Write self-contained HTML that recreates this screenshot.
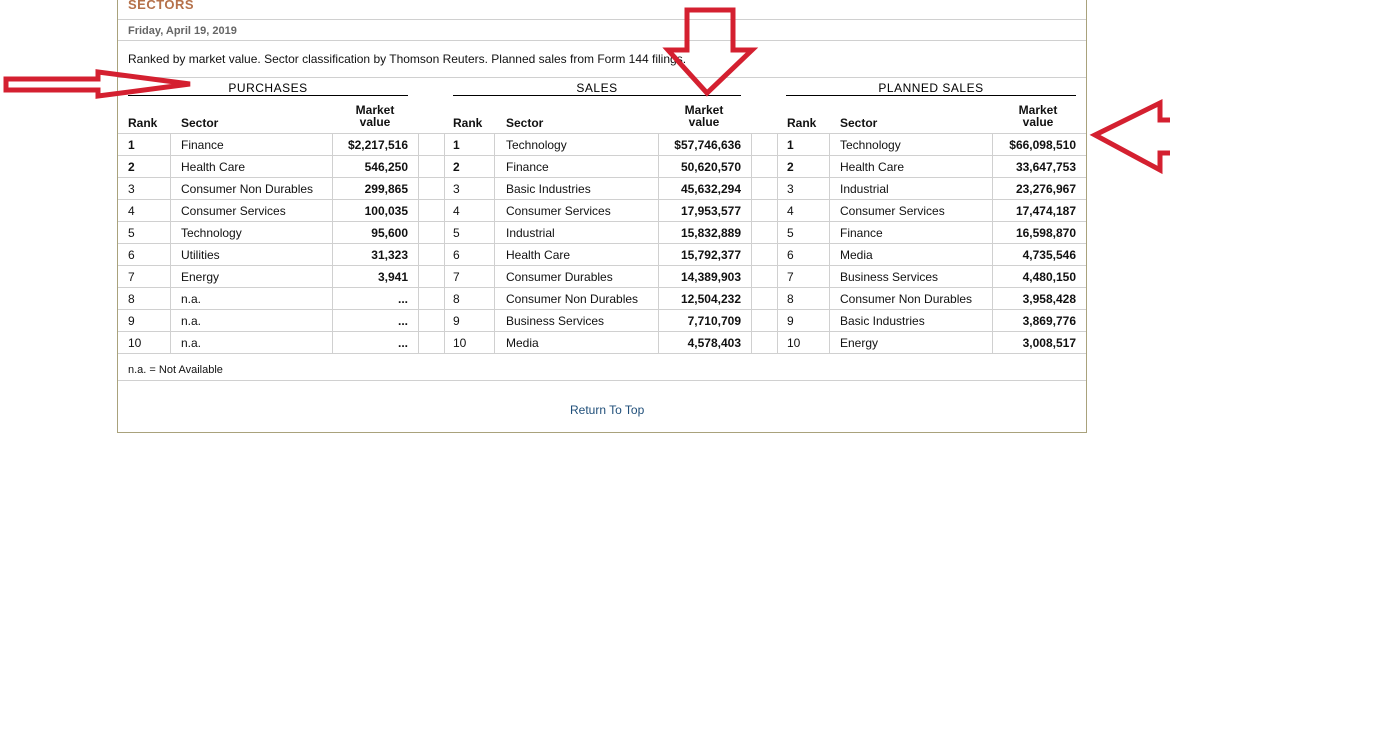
<!DOCTYPE html>
<html><head><meta charset="utf-8"><style>
body{margin:0;width:1398px;height:746px;background:#fff;font-family:"Liberation Sans",Arial,sans-serif;color:#111;position:relative;overflow:hidden}
.box{position:absolute;left:117px;top:-2px;width:968px;height:433px;border:1px solid #a9a27c}
.hl{position:absolute;left:118px;width:968px;height:1px;background:#d0d0d0}
.vl{position:absolute;width:1px;background:#d0d0d0;top:133px;height:220px}
.t{position:absolute;font-size:12px;line-height:14px;white-space:nowrap}
.b{font-weight:bold}
.gh{position:absolute;font-size:12px;letter-spacing:0.5px;text-align:center;border-bottom:1px solid #000;height:14px;top:81px;line-height:14px;color:#000}
.row{position:absolute;left:0;width:1398px;height:22px}
.row span{position:absolute;font-size:12px;top:4px;line-height:14px;white-space:nowrap}
.row .v{font-weight:bold;text-align:right;width:100px}
</style></head><body>
<div class="box"></div>
<div class="t b" style="left:128px;top:-2px;color:#b5714a;font-size:13px;letter-spacing:0.5px">SECTORS</div>
<div class="hl" style="top:19px"></div>
<div class="t b" style="left:128px;top:24px;color:#666;font-size:11px">Friday, April 19, 2019</div>
<div class="hl" style="top:40px"></div>
<div class="t" style="left:128px;top:52px">Ranked by market value. Sector classification by Thomson Reuters. Planned sales from Form 144 filings.</div>
<div class="hl" style="top:77px"></div>
<div class="gh" style="left:128px;width:280px">PURCHASES</div>
<div class="gh" style="left:453px;width:288px">SALES</div>
<div class="gh" style="left:786px;width:290px">PLANNED SALES</div>

<div class="t b" style="left:128px;top:116px">Rank</div><div class="t b" style="left:181px;top:116px">Sector</div><div class="t b" style="left:348px;top:104px;width:54px;text-align:center;line-height:12px">Market<br>value</div>
<div class="t b" style="left:453px;top:116px">Rank</div><div class="t b" style="left:506px;top:116px">Sector</div><div class="t b" style="left:677px;top:104px;width:54px;text-align:center;line-height:12px">Market<br>value</div>
<div class="t b" style="left:787px;top:116px">Rank</div><div class="t b" style="left:840px;top:116px">Sector</div><div class="t b" style="left:1011px;top:104px;width:54px;text-align:center;line-height:12px">Market<br>value</div>

<div class="hl" style="top:133px"></div>
<div class="hl" style="top:155px"></div>
<div class="hl" style="top:177px"></div>
<div class="hl" style="top:199px"></div>
<div class="hl" style="top:221px"></div>
<div class="hl" style="top:243px"></div>
<div class="hl" style="top:265px"></div>
<div class="hl" style="top:287px"></div>
<div class="hl" style="top:309px"></div>
<div class="hl" style="top:331px"></div>
<div class="hl" style="top:353px"></div>
<div class="hl" style="top:380px"></div>
<div class="vl" style="left:170px"></div><div class="vl" style="left:332px"></div><div class="vl" style="left:418px"></div>
<div class="vl" style="left:444px"></div><div class="vl" style="left:494px"></div><div class="vl" style="left:658px"></div>
<div class="vl" style="left:751px"></div><div class="vl" style="left:777px"></div><div class="vl" style="left:829px"></div><div class="vl" style="left:992px"></div>

<div class="row" style="top:134px"><span class="b" style="left:128px">1</span><span style="left:181px">Finance</span><span class="v" style="left:308px">$2,217,516</span><span class="b" style="left:453px">1</span><span style="left:506px">Technology</span><span class="v" style="left:641px">$57,746,636</span><span class="b" style="left:787px">1</span><span style="left:840px">Technology</span><span class="v" style="left:976px">$66,098,510</span></div>
<div class="row" style="top:156px"><span class="b" style="left:128px">2</span><span style="left:181px">Health Care</span><span class="v" style="left:308px">546,250</span><span class="b" style="left:453px">2</span><span style="left:506px">Finance</span><span class="v" style="left:641px">50,620,570</span><span class="b" style="left:787px">2</span><span style="left:840px">Health Care</span><span class="v" style="left:976px">33,647,753</span></div>
<div class="row" style="top:178px"><span style="left:128px">3</span><span style="left:181px">Consumer Non Durables</span><span class="v" style="left:308px">299,865</span><span style="left:453px">3</span><span style="left:506px">Basic Industries</span><span class="v" style="left:641px">45,632,294</span><span style="left:787px">3</span><span style="left:840px">Industrial</span><span class="v" style="left:976px">23,276,967</span></div>
<div class="row" style="top:200px"><span style="left:128px">4</span><span style="left:181px">Consumer Services</span><span class="v" style="left:308px">100,035</span><span style="left:453px">4</span><span style="left:506px">Consumer Services</span><span class="v" style="left:641px">17,953,577</span><span style="left:787px">4</span><span style="left:840px">Consumer Services</span><span class="v" style="left:976px">17,474,187</span></div>
<div class="row" style="top:222px"><span style="left:128px">5</span><span style="left:181px">Technology</span><span class="v" style="left:308px">95,600</span><span style="left:453px">5</span><span style="left:506px">Industrial</span><span class="v" style="left:641px">15,832,889</span><span style="left:787px">5</span><span style="left:840px">Finance</span><span class="v" style="left:976px">16,598,870</span></div>
<div class="row" style="top:244px"><span style="left:128px">6</span><span style="left:181px">Utilities</span><span class="v" style="left:308px">31,323</span><span style="left:453px">6</span><span style="left:506px">Health Care</span><span class="v" style="left:641px">15,792,377</span><span style="left:787px">6</span><span style="left:840px">Media</span><span class="v" style="left:976px">4,735,546</span></div>
<div class="row" style="top:266px"><span style="left:128px">7</span><span style="left:181px">Energy</span><span class="v" style="left:308px">3,941</span><span style="left:453px">7</span><span style="left:506px">Consumer Durables</span><span class="v" style="left:641px">14,389,903</span><span style="left:787px">7</span><span style="left:840px">Business Services</span><span class="v" style="left:976px">4,480,150</span></div>
<div class="row" style="top:288px"><span style="left:128px">8</span><span style="left:181px">n.a.</span><span class="v" style="left:308px">...</span><span style="left:453px">8</span><span style="left:506px">Consumer Non Durables</span><span class="v" style="left:641px">12,504,232</span><span style="left:787px">8</span><span style="left:840px">Consumer Non Durables</span><span class="v" style="left:976px">3,958,428</span></div>
<div class="row" style="top:310px"><span style="left:128px">9</span><span style="left:181px">n.a.</span><span class="v" style="left:308px">...</span><span style="left:453px">9</span><span style="left:506px">Business Services</span><span class="v" style="left:641px">7,710,709</span><span style="left:787px">9</span><span style="left:840px">Basic Industries</span><span class="v" style="left:976px">3,869,776</span></div>
<div class="row" style="top:332px"><span style="left:128px">10</span><span style="left:181px">n.a.</span><span class="v" style="left:308px">...</span><span style="left:453px">10</span><span style="left:506px">Media</span><span class="v" style="left:641px">4,578,403</span><span style="left:787px">10</span><span style="left:840px">Energy</span><span class="v" style="left:976px">3,008,517</span></div>

<div class="t" style="left:128px;top:363px;font-size:11px">n.a. = Not Available</div>
<div class="t" style="left:570px;top:403px;color:#1f4e79">Return To Top</div>

<svg width="1398" height="746" style="position:absolute;left:0;top:0" fill="none" stroke="#d42030" stroke-width="5" stroke-linejoin="miter">
<path d="M6 79 L98 79 L98 72 L190 84 L98 96 L98 90 L6 90 Z"/>
<path d="M687 10 L733 10 L733 50 L752 50 L707 93 L668 50 L687 50 Z"/>
<path d="M1170 120 L1160 120 L1160 103 L1095 135 L1160 170 L1160 153 L1170 153"/>
</svg>
</body></html>
